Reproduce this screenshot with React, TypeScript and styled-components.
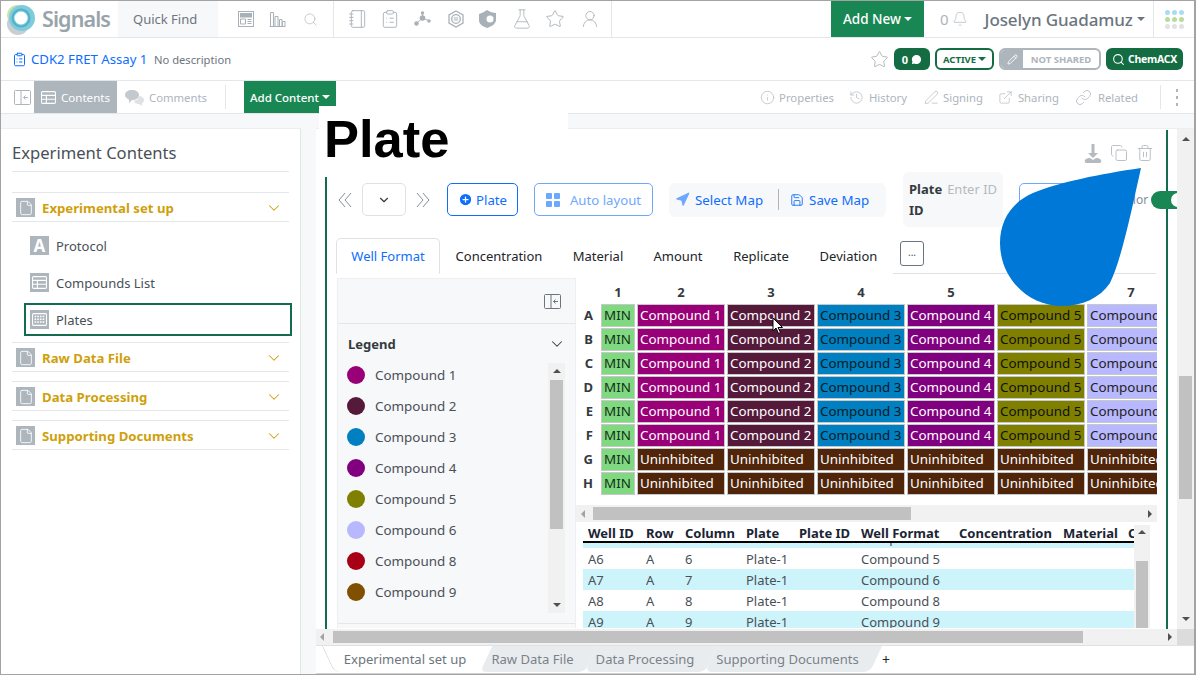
import React from 'react';
import styled, { createGlobalStyle } from 'styled-components';
import {
  Bell, ChevronDown, Copy, FlaskConical, History, Info, Link, Notebook, ExternalLink,
  ClipboardList, MessageCircle, Pencil, PenLine, PlusCircle, Save, Search, Star, Trash2, UserRound,
  Navigation, File,
} from 'lucide-react';

const Global = createGlobalStyle`
  html, body { margin: 0; padding: 0; background: #fff; }
  body { font-family: "Noto Sans", "Open Sans", sans-serif; color: #495057; overflow: hidden; }
  * { box-sizing: border-box; }
`;

const App_ = styled.div`
  width: 1196px; height: 675px; border: 1px solid #a3a3a3; border-right-width: 2px; display: flex; flex-direction: column;
  background: #fff; overflow: hidden; position: relative;
`;
const TopBar = styled.header`
  height: 37px; flex: none; display: flex; align-items: center; border-bottom: 1px solid #e4e7ea; 
`;
const Logo = styled.svg`margin-left: 5px; flex: none;`;
const Brand = styled.span`
  margin-left: 6px; font-size: 21.5px; font-weight: 600; letter-spacing: -0.9px; color: #98a4aa; width: 69px; line-height: 36px; white-space: nowrap;
`;
const QuickFind = styled.div`
  margin-left: 7px; width: 100px; height: 36px; background: #f7f8fa; color: #6c757d; font-size: 13px; display: flex; align-items: center; padding-left: 15px;
`;
const Slot = styled.span<{ $ml: number; $color?: string }>`
  margin-left: ${p => p.$ml}px; display: inline-flex; flex: none; color: ${p => p.$color || '#a9b1b8'};
`;
const VRule = styled.span<{ $ml: number; $h?: number }>`
  margin-left: ${p => p.$ml}px; width: 1px; height: ${p => p.$h || 36}px; background: #e4e7ea; flex: none;
`;
const AddNew = styled.button`
  margin-left: 219px; width: 93px; height: 36px; border: 0; background: #198754; color: #fff; font: 500 13.5px "Noto Sans", sans-serif; display: flex; align-items: center; justify-content: center; gap: 3px; padding: 0;
`;
const Caret = styled.i<{ $c?: string }>`
  display: inline-block; width: 0; height: 0; border-left: 4px solid transparent; border-right: 4px solid transparent; border-top: 4px solid ${p => p.$c || '#fff'};
`;
const Count = styled.span`margin-left: 16px; color: #adb5bd; font-size: 15px;`;
const UserName = styled.span`
  margin-left: 17px; color: #6c757d; font-size: 17px; font-weight: 500; white-space: nowrap; display: flex; align-items: center; gap: 4px; letter-spacing: -0.1px;
`;
const Dots = styled.span`
  margin-left: 11px; display: grid; grid-template-columns: repeat(3, 5px); gap: 2px; 
`;
const Dot = styled.i<{ $c: string }>`width: 5px; height: 5px; border-radius: 50%; background: ${p => p.$c};`;

const TitleBar = styled.div`
  height: 43px; flex: none; display: flex; align-items: center; border-bottom: 1px solid #e4e7ea; padding-right: 11px;
`;
const ExpName = styled.span`margin-left: 4px; color: #0d6efd; font-size: 13.2px; white-space: nowrap; width: 123px;`;
const ExpDesc = styled.span`color: #6c757d; font-size: 11.2px; white-space: nowrap;`;
const TitleRight = styled.div`margin-left: auto; display: flex; align-items: center;`;
const DarkPill = styled.span`
  margin-left: 5px; height: 22px; width: 36px; background: #146c43; border-radius: 6px; color: #fff; font-size: 11px; font-weight: 700; display: flex; align-items: center; justify-content: center; gap: 3px;
`;
const ActivePill = styled.span`
  margin-left: 5px; height: 22px; width: 59px; border: 2px solid #146c43; border-radius: 6px; color: #146c43; font-size: 9.5px; font-weight: 700; display: flex; align-items: center; justify-content: center; gap: 2px;
`;
const SharePill = styled.span`
  margin-left: 5px; height: 22px; width: 102px; border: 2px solid #adb5bd; border-radius: 6px; display: flex; overflow: hidden; font-size: 9.5px; font-weight: 700; color: #adb5bd;
`;
const ShareIcon = styled.span`width: 22px; background: #adb5bd; display: flex; align-items: center; justify-content: center; color: #fff;`;
const ShareText = styled.span`flex: 1; display: flex; align-items: center; justify-content: center;`;
const ChemPill = styled.span`
  margin-left: 5px; height: 22px; width: 77px; background: #146c43; border-radius: 6px; color: #fff; font-size: 10.5px; font-weight: 700; display: flex; align-items: center; justify-content: center; gap: 3px; letter-spacing: -0.3px;
`;

const ActionBar = styled.div`
  height: 33px; flex: none; display: flex; align-items: center; border-bottom: 1px solid #e4e7ea;
`;
const ContentsTab = styled.span`
  margin-left: 3px; width: 83px; height: 32px; background: #adb5bd; color: #fff; font-size: 11.6px; display: flex; align-items: center; justify-content: center; gap: 5px;
`;
const Muted = styled.span<{ $ml?: number }>`
  margin-left: ${p => p.$ml || 0}px; color: #adb5bd; font-size: 11.3px; white-space: nowrap;
`;
const AddContent = styled.button`
  margin-left: 18px; width: 92px; height: 32px; align-self: flex-start; border: 0; padding: 0; background: #198754; color: #fff; font: 500 11.5px "Noto Sans", sans-serif; display: flex; align-items: center; justify-content: center; gap: 3px;
`;
const ActionRight = styled.div`margin-left: auto; display: flex; align-items: center; padding-right: 16px;`;
const Kebab = styled.span`margin-left: 15px; display: grid; gap: 4px;`;
const KebabDot = styled.i`width: 2px; height: 3px; background: #adb5bd;`;

const Main = styled.div`
  flex: 1; min-height: 0; display: flex; background: #f7f8fa; padding-top: 14px;
`;
const Sidebar = styled.aside`
  width: 300px; flex: none; background: #fff; border-right: 1px solid #e4e7ea; border-top: 1px solid #eceef0; padding: 0 11px;
`;
const SideTitle = styled.h2`
  margin: 0 0 20px; height: 43px; font-size: 16.6px; font-weight: 400; color: #495057; display: flex; align-items: center; border-bottom: 1px solid #e4e7ea; padding-top: 4px;
`;
const Section = styled.div`
  height: 30px; border-top: 1px solid #e4e7ea; border-bottom: 1px solid #e4e7ea; display: flex; align-items: center; margin-bottom: 9px; padding: 1px 6px 0 4px;
`;
const OpenSection = styled(Section)`margin-bottom: 0;`;
const SectionIcon = styled.span`
  width: 19px; height: 19px; background: #adb5bd; color: #fff; display: flex; align-items: center; justify-content: center; flex: none; font-size: 17px; font-weight: 700; line-height: 1;
`;
const SectionName = styled.span`
  margin-left: 7px; flex: 1; color: #cf9f0c; font-size: 13.2px; font-weight: 700;
`;
const Children = styled.div`height: 120px; padding-top: 5px;`;
const Child = styled.div<{ $on?: boolean }>`
  height: ${p => p.$on ? 33 : 37}px; margin: ${p => p.$on ? '2px -3px 0 12px' : '0 0 0 12px'}; display: flex; align-items: center; padding-left: ${p => p.$on ? 4 : 6}px; border: ${p => p.$on ? '2px solid #146c4f' : '0'}; font-size: 13px; color: #495057;
`;
const ChildLabel = styled.span`margin-left: 7px;`;

const Workspace = styled.section`
  flex: 1; margin-left: 15px; background: #fff; display: flex; flex-direction: column; position: relative; min-width: 0; border-top: 1px solid #eceef0;
`;
const Viewport = styled.div`flex: 1; min-height: 0; display: flex; overflow: hidden; position: relative;`;
const Scrolled = styled.div`flex: 1; min-width: 0; padding: 1px 0 0 9px; position: relative; overflow: hidden;`;
const Frame = styled.div`
  width: 843px; height: 600px; border-left: 2px solid #146c4f; border-right: 2px solid #146c4f;
`;
const PlateHeader = styled.h1`
  position: absolute; left: 3px; top: -23px; z-index: 3; width: 249px; height: 71px; margin: 0; background: #fff; padding-left: 5px; color: #000;
  font: 700 52.5px/66px "Liberation Sans", Arial, sans-serif;
`;
const TopTools = styled.div`
  height: 42px; display: flex; justify-content: flex-end; align-items: flex-start; gap: 8px; padding: 14px 12px 0 0; color: #b5bac0;
`;
const Toolbar = styled.div`
  height: 55px; display: flex; align-items: center; padding-left: 11px; width: 900px; flex-wrap: nowrap;
`;
const NavIcon = styled.svg<{ $ml?: number }>`margin-left: ${p => p.$ml || 0}px; flex: none; color: #868e96;`;
const SelectBox = styled.span`
  margin-left: 10px; width: 44px; height: 33px; border: 1px solid #dee2e6; border-radius: 5px; display: flex; align-items: center; justify-content: center; color: #343a40; flex: none;
`;
const PlateBtn = styled.button<{ $w: number; $ml: number; $light?: boolean }>`
  margin-left: ${p => p.$ml}px; width: ${p => p.$w}px; height: 33px; background: #fff; border: 1px solid ${p => p.$light ? '#6ea8fe' : '#0d6efd'}; border-radius: 5px;
  color: ${p => p.$light ? '#6ea8fe' : '#0d6efd'}; font: 400 13.2px "Noto Sans", sans-serif; display: flex; align-items: center; justify-content: center; gap: ${p => p.$light ? 10 : 3}px; padding: 0; flex: none;
`;
const Squares = styled.span`display: grid; grid-template-columns: 6px 6px; gap: 2px;`;
const Sq = styled.i`width: 6px; height: 6px; background: #6ea8fe; border-radius: 1px;`;
const MapGroup = styled.div`
  margin-left: 16px; width: 217px; height: 34px; background: #f7f8fa; border-radius: 6px; display: flex; align-items: center; color: #0d6efd; font-size: 13.3px; padding-left: 6px; flex: none;
`;
const MapLabel = styled.span`margin-left: 5px; white-space: nowrap;`;
const MapRule = styled.i`width: 1px; height: 21px; background: #adb5bd; margin: 0 11px 0 15px; flex: none;`;
const IdBox = styled.div`
  margin-left: 17px; width: 100px; height: 55px; background: #f7f8fa; border-radius: 6px; padding: 7px 6px; font-size: 13px; font-weight: 700; color: #343a40; line-height: 21px; flex: none; white-space: nowrap;
`;
const IdHint = styled.span`margin-left: 5px; font-weight: 400; color: #b5bac0; font-size: 13px;`;
const NextBtn = styled.span`
  margin-left: 16px; width: 80px; height: 33px; border: 1px solid #6ea8fe; border-radius: 5px; flex: none;
`;
const ColorLabel = styled.span`margin-left: 19px; font-size: 12px; color: #868e96; flex: none;`;
const Toggle = styled.span`
  margin-left: 3px; width: 40px; height: 18px; border-radius: 9px; background: #198754; display: flex; align-items: center; justify-content: flex-end; flex: none; position: relative; z-index: 1;
`;
const Knob = styled.i`width: 14px; height: 14px; border-radius: 50%; background: #fff; margin-right: 6px;`;

const Tabs = styled.div`
  margin: 11px 10px 0 9px; height: 36px; border-bottom: 1px solid #dee2e6; display: flex; font-size: 13px; color: #212529;
`;
const Tab = styled.span<{ $on?: boolean; $w: number }>`
  width: ${p => p.$w}px; height: 36px; display: flex; align-items: center; justify-content: center; white-space: nowrap; flex: none;
  color: ${p => p.$on ? '#0d6efd' : '#212529'};
  border: ${p => p.$on ? '1px solid #dee2e6' : '0'}; border-bottom: ${p => p.$on ? '1px solid #fff' : '0'}; border-radius: 5px 5px 0 0; background: #fff;
`;
const MoreTab = styled.span`
  margin: 3px 0 0 7px; width: 24px; height: 25px; border: 1px solid #6c757d; border-radius: 3px; display: flex; align-items: center; justify-content: center; font-size: 10px; color: #495057; padding-bottom: 4px; line-height: 1;
`;
const Body = styled.div`
  margin: 4px 10px 0 10px; display: grid; grid-template-columns: 239px 581px; height: 350px;
`;
const Legend = styled.div`
  background: #f7f8fa; border: 1px solid #eceef0; border-bottom: 0;
`;
const LegendTop = styled.div`
  height: 45px; border-bottom: 1px solid #e4e7ea; display: flex; align-items: center; justify-content: flex-end; padding-right: 14px; color: #6c757d;
`;
const LegendHead = styled.div`
  height: 35px; display: flex; align-items: center; justify-content: space-between; padding: 4px 9px 0 10px; font-size: 13px; font-weight: 700; color: #343a40;
`;
const LegendBody = styled.div`
  height: 265px; display: flex; border-bottom: 1px solid #e4e7ea;
`;
const LegendList = styled.div`flex: 1;`;
const LegendItem = styled.div`
  height: 31px; display: flex; align-items: center; padding-left: 9px; font-size: 13.4px; color: #495057;
`;
const Swatch = styled.i<{ $c: string }>`
  width: 18px; height: 18px; border-radius: 50%; background: ${p => p.$c}; margin-right: 10px; flex: none;
`;
const VTrack = styled.div<{ $h: number; $mt?: number; $mr?: number; $w?: number; $bg?: string }>`
  width: ${p => p.$w || 17}px; height: ${p => p.$h}px; margin-top: ${p => p.$mt || 0}px; margin-right: ${p => p.$mr || 0}px; background: ${p => p.$bg || '#f1f1f1'}; position: relative; flex: none;
`;
const VThumb = styled.div<{ $top: number; $h: number }>`
  position: absolute; left: 2px; right: 2px; top: ${p => p.$top}px; height: ${p => p.$h}px; background: #c1c1c1;
`;
const Arrow = styled.i<{ $dir: 'up' | 'down' | 'left' | 'right'; $off?: number }>`
  position: absolute; width: 0; height: 0;
  ${p => p.$dir === 'up' && `top: ${p.$off ?? 6}px; left: 50%; margin-left: -4px; border-left: 4px solid transparent; border-right: 4px solid transparent; border-bottom: 4px solid #505050;`}
  ${p => p.$dir === 'down' && `bottom: ${p.$off ?? 6}px; left: 50%; margin-left: -4px; border-left: 4px solid transparent; border-right: 4px solid transparent; border-top: 4px solid #505050;`}
  ${p => p.$dir === 'left' && `left: ${p.$off ?? 4}px; top: 50%; margin-top: -4px; border-top: 4px solid transparent; border-bottom: 4px solid transparent; border-right: 4px solid #a3a3a3;`}
  ${p => p.$dir === 'right' && `right: ${p.$off ?? 4}px; top: 50%; margin-top: -4px; border-top: 4px solid transparent; border-bottom: 4px solid transparent; border-left: 4px solid #505050;`}
`;
const PlateArea = styled.div`position: relative; min-width: 0;`;
const PlateGrid = styled.div`
  height: 227px; padding-top: 6px; overflow: hidden; display: grid; grid-template-columns: 23px 34px repeat(8, 88px); grid-auto-rows: 23px; column-gap: 2px; row-gap: 1px; grid-template-rows: 19px;
  align-content: start;
`;
const ColHead = styled.span`
  text-align: center; font-size: 13px; font-weight: 700; color: #343a40; line-height: 16px;
`;
const RowHead = styled.span`
  text-align: right; padding-right: 6px; font-size: 13px; font-weight: 700; color: #343a40; line-height: 23px;
`;
const Well = styled.span<{ $bg: string; $fg: string }>`
  background: ${p => p.$bg}; color: ${p => p.$fg}; border: 1px solid #c6c8ca; font-size: 13.4px; line-height: 20px; padding-left: 2px; white-space: nowrap; overflow: hidden;
`;
const HTrack = styled.div<{ $h?: number }>`height: ${p => p.$h || 17}px; background: #f1f1f1; position: relative; flex: none;`;
const HThumb = styled.div<{ $l: number; $w: number }>`
  position: absolute; left: ${p => p.$l}px; width: ${p => p.$w}px; top: 2px; bottom: 2px; background: #c1c1c1;
`;
const TableWrap = styled.div`
  margin: 3px 7px 0 7px; display: flex; height: 103px; overflow: hidden;
`;
const TableMain = styled.div`width: 551px; overflow: hidden; flex: none;`;
const TableHead = styled.div`
  height: 18px; border-bottom: 2px solid #000; position: relative; z-index: 1; background: #fff;
`;
const TRow = styled.div<{ $alt?: boolean; $head?: boolean; $clip?: boolean }>`
  height: ${p => p.$head ? 16 : 21}px; display: grid; grid-template-columns: 58px 39px 61px 53px 62px 98px 104px 65px 40px; padding-left: 5px; white-space: nowrap; overflow: hidden;
  margin-top: ${p => p.$clip ? -16 : 0}px; font-size: 13px; font-weight: ${p => p.$head ? 700 : 400}; color: ${p => p.$head ? '#1b2433' : '#495057'}; line-height: ${p => p.$head ? 16 : 22}px;
  background: ${p => p.$alt ? '#cdf3fb' : 'transparent'};
`;
const CellTxt = styled.span`overflow: hidden;`;
const RowsClip = styled.div`overflow: hidden; height: 85px;`;
const PageV = styled(VTrack)``;
const Corner = styled.div`width: 17px; height: 16px; background: #dcdcdc; flex: none;`;
const HRow = styled.div`display: flex; height: 16px; flex: none;`;
const PageH = styled(HTrack)`flex: 1;`;
const Sheets = styled.div`
  height: 29px; flex: none; display: flex; padding-left: 14px; padding-bottom: 1px; border-top: 1px solid #e0e2e4; border-bottom: 1px solid #cfd2d5; background: #fff; align-items: stretch; font-size: 13.05px;
`;
const Sheet = styled.span<{ $w: number; $on?: boolean }>`
  width: ${p => p.$w}px; position: relative; display: flex; align-items: center; justify-content: center; white-space: nowrap; isolation: isolate; flex: none;
  color: ${p => p.$on ? '#6c757d' : '#7a8289'}; z-index: ${p => p.$on ? 2 : 1};
  &::before {
    content: ""; position: absolute; inset: 0; z-index: -1; background: ${p => p.$on ? '#fff' : '#e9ecef'}; transform: skewX(-25deg); transform-origin: bottom; border-radius: 0 0 6px 6px;
  }
  ${p => p.$on && `&::after { content: ""; position: absolute; top: 0; bottom: 0; left: 4px; width: 60px; z-index: -1; background: #fff; transform: skewX(25deg); transform-origin: bottom; border-radius: 0 0 0 6px; border-left: 1px solid #d5d8db; }`}
`;
const Plus = styled.span`margin-left: 12px; color: #212529; font-size: 14px; display: flex; align-items: center;`;
const Drop = styled.svg`position: absolute; left: 684px; top: 39px; z-index: 4;`;
const Cursor = styled.svg`position: absolute; left: 196px; top: 39px; z-index: 2;`;

const Doc = () => <File size={16} strokeWidth={1.3} />;
const Panel = ({ c = '#adb5bd' }: { c?: string }) => (
  <svg width="17" height="15" viewBox="0 0 17 15" fill="none" stroke={c} strokeWidth="1"><rect x=".5" y=".5" width="16" height="14" rx="1" /><path d="M7 .5v14M14 7.5H9.5M11.5 5.500 9.500 7.500l2 2" /></svg>
);
const TableIcon = ({ c = '#fff', s = 15 }: { c?: string; s?: number }) => (
  <svg width={s} height={s} viewBox="0 0 14 14" fill="none" stroke={c} strokeWidth="1"><rect x=".5" y="1.5" width="13" height="11" rx="1" /><path d="M.5 5h13M.5 8.700h13M5 5v7.500" /></svg>
);
const WellsIcon = () => (
  <svg width="15" height="15" viewBox="0 0 14 14" fill="#fff"><rect x=".5" y="1.5" width="13" height="11" rx="1" fill="none" stroke="#fff" />{[0,1,2].map(r => [0,1,2,3].map(c => <rect key={`${r}${c}`} x={2.4 + c * 2.5} y={3.4 + r * 2.6} width="1.5" height="1.5" />))}</svg>
);

const rows = ['A','B','C','D','E','F','G','H'];
const palette: Record<string,[string,string]> = {
  'MIN': ['#80d980','#15301a'],
  'Compound 1': ['#990077','#fff'],
  'Compound 2': ['#551a3a','#fff'],
  'Compound 3': ['#0080c0','#0a1a25'],
  'Compound 4': ['#800080','#fff'],
  'Compound 5': ['#808000','#111'],
  'Compound 6': ['#b8b8ff','#222'],
  'Uninhibited': ['#50250a','#fff'],
};
const legend: [string,string][] = [
  ['Compound 1','#990077'],['Compound 2','#551a3a'],['Compound 3','#0080c0'],['Compound 4','#800080'],
  ['Compound 5','#808000'],['Compound 6','#b8b8ff'],['Compound 8','#a80014'],['Compound 9','#7f5000'],
];
const wellRows = [
  ['A5','A','5','Plate-1','','Compound 4'],['A6','A','6','Plate-1','','Compound 5'],['A7','A','7','Plate-1','','Compound 6'],
  ['A8','A','8','Plate-1','','Compound 8'],['A9','A','9','Plate-1','','Compound 9'],
];
const heads = ['Well ID','Row','Column','Plate','Plate ID','Well Format','Concentration','Material','Comment'];

export default function App() {
  return (
    <App_>
      <Global />
      <TopBar>
        <Logo width="30" height="33" viewBox="0 0 30 33">
          <circle cx="11" cy="12" r="10" fill="#b8d99a" opacity=".8" />
          <circle cx="12" cy="21" r="11" fill="#c9ced2" />
          <circle cx="16" cy="15" r="13" fill="#7fcbdc" />
          <circle cx="15" cy="15" r="6.5" fill="#fff" />
          <circle cx="15" cy="15" r="8.5" fill="none" stroke="#3aa6c6" strokeWidth="2" opacity=".7" />
        </Logo>
        <Brand>Signals</Brand>
        <QuickFind>Quick Find</QuickFind>
        <Slot $ml={20}><svg width="16" height="16" viewBox="0 0 16 16" fill="none" stroke="currentColor"><rect x=".5" y=".5" width="15" height="15" /><rect x="2.5" y="2.5" width="11" height="3.5" fill="currentColor" /><path d="M2.500 8h5v5h-5zM9.500 8.500h4M9.500 10.500h4M9.500 12.500h4" /></svg></Slot>
        <Slot $ml={15}><svg width="17" height="16" viewBox="0 0 17 16" fill="none" stroke="currentColor"><path d="M.5 15.500h16M1.500 15V1.500h3V15M6 15V5.500h3V15M10.500 15V8.500h2.500V15M13.500 15V10.500H16V15" /></svg></Slot>
        <Slot $ml={17}><Search size={15} strokeWidth={1} /></Slot>
        <VRule $ml={15} />
        <Slot $ml={14}><Notebook size={20} strokeWidth={1.1} /></Slot>
        <Slot $ml={12}><ClipboardList size={20} strokeWidth={1.1} /></Slot>
        <Slot $ml={14}><svg width="17" height="16" viewBox="0 0 17 16" fill="currentColor" stroke="currentColor"><path d="M8.500 6 8.500 2M8.500 7 3 12M8.500 7 14.500 9.500" fill="none" /><circle cx="8.500" cy="7" r="2.800" stroke="none" /><circle cx="8.500" cy="2" r="1.700" stroke="none" /><circle cx="2.500" cy="12.500" r="2.200" stroke="none" /><circle cx="15" cy="10" r="1.800" stroke="none" /></svg></Slot>
        <Slot $ml={17}><svg width="16" height="18" viewBox="0 0 16 18" fill="none" stroke="currentColor" strokeWidth="1.3"><path d="M8 1 15 5v8l-7 4-7-4V5z" /><circle cx="8" cy="9" r="4.300" /><path d="M5.800 8h4.400M5.800 10h4.400" strokeWidth="1" /></svg></Slot>
        <Slot $ml={15}><svg width="17" height="18" viewBox="0 0 17 18" fill="currentColor"><path d="M8 0c3 2 6 3 9 3v7c0 3-3 6-9 8-5-2-8-4-8-8V4c3-1 5-2 8-4z" /><circle cx="11" cy="9" r="3.500" fill="#fff" /></svg></Slot>
        <Slot $ml={15}><FlaskConical size={22} strokeWidth={0.9} /></Slot>
        <Slot $ml={12}><Star size={20} strokeWidth={1.1} /></Slot>
        <Slot $ml={15}><UserRound size={20} strokeWidth={1} /></Slot>
        <VRule $ml={11} />
        <AddNew>Add New <Caret /></AddNew>
        <Count>0</Count>
        <Slot $ml={3}><Bell size={16} strokeWidth={1} /></Slot>
        <UserName>Joselyn Guadamuz <Caret $c="#6c757d" /></UserName>
        <VRule $ml={8} />
        <Dots>
          {['#a9dcf3','#a9dcf3','#a9dcf3','#b9dc9c','#b9dc9c','#b9dc9c','#e0e2e4','#e0e2e4','#e0e2e4'].map((c, i) => <Dot key={i} $c={c} />)}
        </Dots>
      </TopBar>

      <TitleBar>
        <Slot $ml={11} $color="#0d6efd"><ClipboardList size={15} strokeWidth={1.6} /></Slot>
        <ExpName>CDK2 FRET Assay 1</ExpName>
        <ExpDesc>No description</ExpDesc>
        <TitleRight>
          <Slot $ml={0}><Star size={19} strokeWidth={1.1} /></Slot>
          <DarkPill>0 <MessageCircle size={11} fill="#fff" strokeWidth={0} /></DarkPill>
          <ActivePill>ACTIVE <Caret $c="#146c43" /></ActivePill>
          <SharePill><ShareIcon><Pencil size={11} /></ShareIcon><ShareText>NOT SHARED</ShareText></SharePill>
          <ChemPill><Search size={13} />ChemACX</ChemPill>
        </TitleRight>
      </TitleBar>

      <ActionBar>
        <Slot $ml={13}><Panel /></Slot>
        <ContentsTab><TableIcon />Contents</ContentsTab>
        <Slot $ml={8}>
          <svg width="20" height="17" viewBox="0 0 20 17"><path d="M7 1c4 0 7 2 7 5s-3 5-7 5l-3 3v-3.500C2 9.500 0 8 0 6c0-3 3-5 7-5z" fill="#c4c9ce" /><path d="M13 7c3.500 0 6 1.500 6 4 0 1.500-1 2.700-2 3.200V17l-3-2c-3 0-5-1.500-5-3.500 3 0 5-1.500 4-4.500z" fill="#dfe2e5" /></svg>
        </Slot>
        <Muted $ml={4}>Comments</Muted>
        <VRule $ml={18} $h={24} />
        <AddContent>Add Content <Caret /></AddContent>
        <ActionRight>
          <Slot $ml={0}><Info size={15} strokeWidth={1} /></Slot><Muted $ml={4}>Properties</Muted>
          <Slot $ml={15}><History size={15} strokeWidth={1} /></Slot><Muted $ml={5}>History</Muted>
          <Slot $ml={17}><PenLine size={15} strokeWidth={1} /></Slot><Muted $ml={4}>Signing</Muted>
          <Slot $ml={15}><ExternalLink size={15} strokeWidth={1} /></Slot><Muted $ml={5}>Sharing</Muted>
          <Slot $ml={16}><Link size={17} strokeWidth={1} /></Slot><Muted $ml={6}>Related</Muted>
          <VRule $ml={22} $h={24} />
          <Kebab><KebabDot /><KebabDot /><KebabDot /></Kebab>
        </ActionRight>
      </ActionBar>

      <Main>
        <Sidebar>
          <SideTitle>Experiment Contents</SideTitle>
          <OpenSection>
            <SectionIcon><Doc /></SectionIcon><SectionName>Experimental set up</SectionName>
            <Slot $ml={0} $color="#cf9f0c"><ChevronDown size={18} strokeWidth={1.4} /></Slot>
          </OpenSection>
          <Children>
            <Child><SectionIcon>A</SectionIcon><ChildLabel>Protocol</ChildLabel></Child>
            <Child><SectionIcon><TableIcon /></SectionIcon><ChildLabel>Compounds List</ChildLabel></Child>
            <Child $on><SectionIcon><WellsIcon /></SectionIcon><ChildLabel>Plates</ChildLabel></Child>
          </Children>
          {['Raw Data File','Data Processing','Supporting Documents'].map(n => (
            <Section key={n}>
              <SectionIcon><Doc /></SectionIcon><SectionName>{n}</SectionName>
              <Slot $ml={0} $color="#cf9f0c"><ChevronDown size={18} strokeWidth={1.4} /></Slot>
            </Section>
          ))}
        </Sidebar>

        <Workspace>
          <PlateHeader>Plate</PlateHeader>
          <Viewport>
            <Scrolled>
              <Frame>
                <TopTools>
                  <svg width="18" height="20" viewBox="0 0 18 20" fill="currentColor"><path d="M7.500 0h3v9h3.500L9 14 4 9h3.500z" /><path d="M1 16c1-1.500 3-2 5-2l3 2 3-2c2 0 4 .5 5 2 .8 1.200 0 3-1.500 3h-13C1 19 .2 17.200 1 16z" /></svg>
                  <Copy size={18} strokeWidth={1.2} />
                  <Trash2 size={18} strokeWidth={1.2} />
                </TopTools>
                <Toolbar>
                  <NavIcon width="14" height="16" viewBox="0 0 14 16" fill="none" stroke="currentColor"><path d="M7 1 1 8l6 7M13 1 7 8l6 7" /></NavIcon>
                  <SelectBox><ChevronDown size={14} /></SelectBox>
                  <NavIcon $ml={10} width="14" height="16" viewBox="0 0 14 16" fill="none" stroke="currentColor"><path d="M1 1l6 7-6 7M7 1l6 7-6 7" /></NavIcon>
                  <PlateBtn $w={71} $ml={17}><PlusCircle size={15} fill="#0d6efd" color="#fff" />Plate</PlateBtn>
                  <PlateBtn $w={119} $ml={16} $light><Squares><Sq /><Sq /><Sq /><Sq /></Squares>Auto layout</PlateBtn>
                  <MapGroup>
                    <Navigation size={15} fill="#6ea8fe" color="#6ea8fe" />
                    <MapLabel>Select Map</MapLabel>
                    <MapRule />
                    <Save size={14} strokeWidth={1.5} />
                    <MapLabel>Save Map</MapLabel>
                  </MapGroup>
                  <IdBox>Plate<IdHint>Enter ID</IdHint><br />ID</IdBox>
                  <NextBtn />
                  <ColorLabel>Color</ColorLabel>
                  <Toggle><Knob /></Toggle>
                </Toolbar>
                <Tabs>
                  <Tab $on $w={104}>Well Format</Tab>
                  <Tab $w={118}>Concentration</Tab>
                  <Tab $w={80}>Material</Tab>
                  <Tab $w={80}>Amount</Tab>
                  <Tab $w={86}>Replicate</Tab>
                  <Tab $w={89}>Deviation</Tab>
                  <MoreTab>...</MoreTab>
                </Tabs>
                <Body>
                  <Legend>
                    <LegendTop><Panel c="#6c757d" /></LegendTop>
                    <LegendHead>Legend <ChevronDown size={18} strokeWidth={1.4} /></LegendHead>
                    <LegendBody>
                      <LegendList>
                        {legend.map(([n, c]) => <LegendItem key={n}><Swatch $c={c} />{n}</LegendItem>)}
                      </LegendList>
                      <VTrack $h={250} $mt={4} $mr={10}>
                        <Arrow $dir="up" $off={6} />
                        <VThumb $top={17} $h={149} />
                        <Arrow $dir="down" $off={6} />
                      </VTrack>
                    </LegendBody>
                  </Legend>
                  <PlateArea>
                    <PlateGrid>
                      <span />
                      {[1,2,3,4,5,6,7,8].map(n => <ColHead key={n}>{n}</ColHead>)}
                      <span />
                      {rows.map(r => (
                        <React.Fragment key={r}>
                          <RowHead>{r}</RowHead>
                          {['MIN','Compound 1','Compound 2','Compound 3','Compound 4','Compound 5','Compound 6','Compound 8'].map(n => {
                            const label = (r === 'G' || r === 'H') && n !== 'MIN' ? 'Uninhibited' : n;
                            const [bg, fg] = palette[label] || palette['Compound 1'];
                            return <Well key={n} $bg={bg} $fg={fg}>{label}</Well>;
                          })}
                          <span />
                        </React.Fragment>
                      ))}
                    </PlateGrid>
                    <Cursor width="12" height="18" viewBox="0 0 12 18"><path d="M1 1v13l3-3 2.500 5.500 2-1L6 10.500h4.500z" fill="#fff" stroke="#000" strokeWidth="1" /></Cursor>
                    <HTrack>
                      <Arrow $dir="left" $off={5} />
                      <HThumb $l={17} $w={318} />
                      <Arrow $dir="right" $off={5} />
                    </HTrack>
                    <TableWrap>
                      <TableMain>
                        <TableHead>
                          <TRow $head>{heads.map(h => <CellTxt key={h}>{h}</CellTxt>)}</TRow>
                        </TableHead>
                        <RowsClip>
                          {wellRows.map((r, i) => (
                            <TRow key={r[0]} $clip={i === 0} $alt={i % 2 === 0}>
                              {r.map((c, j) => <CellTxt key={j}>{c}</CellTxt>)}
                            </TRow>
                          ))}
                        </RowsClip>
                      </TableMain>
                      <VTrack $h={103} $w={16}>
                        <Arrow $dir="up" $off={5} />
                        <VThumb $top={36} $h={67} />
                      </VTrack>
                    </TableWrap>
                  </PlateArea>
                </Body>
              </Frame>
            </Scrolled>
            <PageV $h={500}>
              <Arrow $dir="up" $off={8} />
              <VThumb $top={247} $h={123} />
              <Arrow $dir="down" $off={8} />
            </PageV>
            <Drop width="142" height="139" viewBox="0 0 142 139">
              <path d="M141 0C100 6 60 14 33 25 12 34 0 52 0 75c0 35 28 63 62 63 20 0 38-8 48-23C122 90 132 40 141 0z" fill="#0078d7" />
            </Drop>
          </Viewport>
          <HRow>
            <PageH $h={16}>
              <Arrow $dir="left" $off={4} />
              <HThumb $l={17} $w={750} />
              <Arrow $dir="right" $off={5} />
            </PageH>
            <Corner />
          </HRow>
          <Sheets>
            <Sheet $w={150} $on>Experimental set up</Sheet>
            <Sheet $w={105}>Raw Data File</Sheet>
            <Sheet $w={120}>Data Processing</Sheet>
            <Sheet $w={165}>Supporting Documents</Sheet>
            <Plus>+</Plus>
          </Sheets>
        </Workspace>
      </Main>
    </App_>
  );
}
